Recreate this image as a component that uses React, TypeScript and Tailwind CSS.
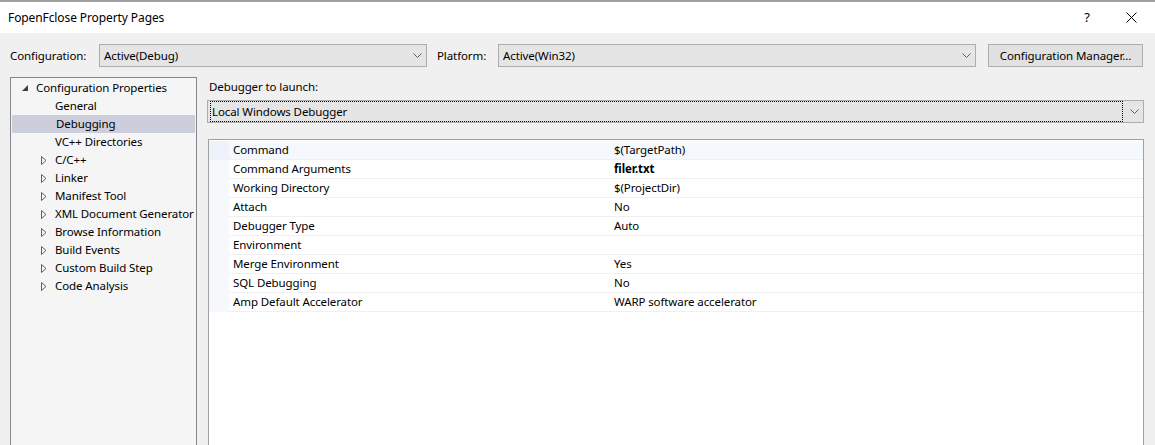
import React from "react";

const font = { fontFamily: '"Noto Sans", "Liberation Sans", sans-serif' };

const treeItems: { label: string; level: number; expander?: "open" | "closed"; selected?: boolean }[] = [
  { label: "Configuration Properties", level: 0, expander: "open" },
  { label: "General", level: 1 },
  { label: "Debugging", level: 1, selected: true },
  { label: "VC++ Directories", level: 1 },
  { label: "C/C++", level: 1, expander: "closed" },
  { label: "Linker", level: 1, expander: "closed" },
  { label: "Manifest Tool", level: 1, expander: "closed" },
  { label: "XML Document Generator", level: 1, expander: "closed" },
  { label: "Browse Information", level: 1, expander: "closed" },
  { label: "Build Events", level: 1, expander: "closed" },
  { label: "Custom Build Step", level: 1, expander: "closed" },
  { label: "Code Analysis", level: 1, expander: "closed" },
];

const props: { name: string; value: string; bold?: boolean }[] = [
  { name: "Command", value: "$(TargetPath)" },
  { name: "Command Arguments", value: "filer.txt", bold: true },
  { name: "Working Directory", value: "$(ProjectDir)" },
  { name: "Attach", value: "No" },
  { name: "Debugger Type", value: "Auto" },
  { name: "Environment", value: "" },
  { name: "Merge Environment", value: "Yes" },
  { name: "SQL Debugging", value: "No" },
  { name: "Amp Default Accelerator", value: "WARP software accelerator" },
];

const Chevron = () => (
  <svg width="9" height="6" viewBox="0 0 9 6" className="shrink-0">
    <path d="M0.5 0.5 L4.5 4.5 L8.5 0.5" fill="none" stroke="#606060" strokeWidth="1" />
  </svg>
);

// 콤보박스
const Combo = ({ text, className, focused }: { text: string; className: string; focused?: boolean }) => (
  <div className={`flex h-[23px] items-center border border-[#adadad] bg-[#e5e5e5] ${className}`}>
    <div className={`flex h-full flex-1 items-center ${focused ? "m-[2px] border border-dotted border-black pl-[1px]" : "pl-[4px]"}`}>
      <span className="text-black">{text}</span>
    </div>
    <div className="flex h-full w-[18px] items-center justify-center">
      <Chevron />
    </div>
  </div>
);

export default function App() {
  return (
    <div style={font} className="flex h-[445px] w-[1155px] flex-col overflow-hidden bg-[#f0f0f0] text-[11.5px] tracking-[-0.1px] text-black">
      {/* title bar */}
      <div className="flex h-[33px] shrink-0 items-center border-t-2 border-[#a0a0a0] bg-white pl-[8px]">
        <span className="flex-1 pt-[1px] text-[12px]">FopenFclose Property Pages</span>
        <span className="w-[20px] text-center text-[13px]">?</span>
        <svg width="11" height="11" viewBox="0 0 11 11" className="ml-[29px] shrink-0">
          <path d="M0.5 0.5 L10.5 10.5 M10.5 0.5 L0.5 10.5" stroke="#000" strokeWidth="1" />
        </svg>
        <div className="w-[18px] shrink-0" />
      </div>

      {/* configuration row */}
      <div className="mt-[11px] flex h-[23px] shrink-0 items-center pl-[10px]">
        <span className="w-[89px]">Configuration:</span>
        <Combo text="Active(Debug)" className="w-[328px]" />
        <span className="ml-[10px] w-[61px]">Platform:</span>
        <Combo text="Active(Win32)" className="w-[478px]" />
        <div className="ml-[12px] flex h-[23px] w-[155px] items-center justify-center border border-[#adadad] bg-[#e1e1e1]">
          Configuration Manager...
        </div>
      </div>

      <div className="mt-[10px] flex flex-1 gap-[11px] pl-[10px] pr-[11px]">
        {/* tree */}
        <div className="w-[187px] shrink-0 border border-b-0 border-[#828790] bg-[#f5f5f5] pt-[1px]">
          {treeItems.map((it) => (
            <div
              key={it.label}
              className={`flex h-[18px] items-center whitespace-nowrap ${it.selected ? "mx-[1px] bg-[#cccedb]" : ""}`}
            >
              <div className={`flex shrink-0 items-center justify-center ${it.level === 0 ? "ml-[5px] w-[18px]" : "ml-[24px] w-[18px]"} ${it.selected ? "-ml-[1px]" : ""}`}>
                {it.expander === "open" && (
                  <svg width="6" height="6" viewBox="0 0 6 6">
                    <path d="M6 0 L6 6 L0 6 Z" fill="#404040" />
                  </svg>
                )}
                {it.expander === "closed" && (
                  <svg width="6" height="9" viewBox="0 0 6 9">
                    <path d="M0.5 0.5 L5 4.5 L0.5 8.5 Z" fill="none" stroke="#606060" strokeWidth="1" />
                  </svg>
                )}
              </div>
              <span className="ml-[2px]">{it.label}</span>
            </div>
          ))}
        </div>

        {/* debugging page */}
        <div className="flex flex-1 flex-col">
          <div className="h-[20px] pl-[1px] pt-[1px]">Debugger to launch:</div>
          <Combo text="Local Windows Debugger" className="-ml-[1px] mt-[3px] w-[937px]" focused />
          <div className="mt-[16px] flex-1 border border-b-0 border-[#a0a0a0] bg-white pt-[1px]">
            {props.map((p, i) => (
              <div key={p.name} className="flex h-[19px] items-stretch">
                <div className={`w-[20px] shrink-0 ${i === 0 ? "bg-[#eef2fa]" : "bg-[#f6f8fc]"}`} />
                <div
                  className={`flex flex-1 items-center border-b border-[#f0f0f0] ${i === 0 ? "bg-[#f5f8fd]" : ""}`}
                >
                  <span className="w-[385px] shrink-0 pl-[4px]">{p.name}</span>
                  <span className={p.bold ? "font-bold" : ""}>{p.value}</span>
                </div>
              </div>
            ))}
          </div>
        </div>
      </div>
    </div>
  );
}
